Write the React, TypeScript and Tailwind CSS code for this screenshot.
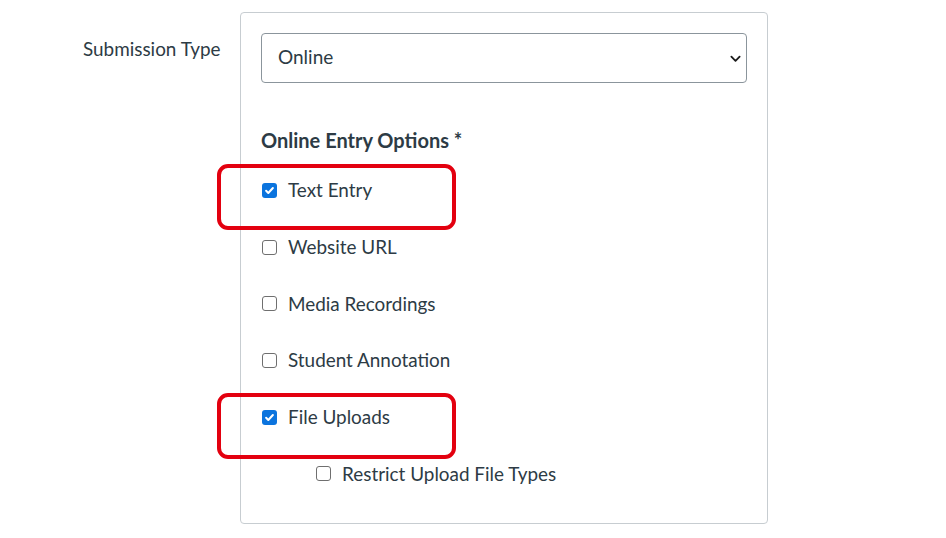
import React from "react";

const TEXT = "text-[#2d3b45]";

function Box({ checked }: { checked: boolean }) {
  if (checked) {
    return (
      <span className="w-[15px] h-[15px] rounded-[3px] bg-[#0b74de] flex items-center justify-center shrink-0">
        <svg viewBox="0 0 12 12" className="w-[11px] h-[11px]" fill="none" stroke="white" strokeWidth={2.2} strokeLinecap="round" strokeLinejoin="round">
          <path d="M2.3 6.3l2.4 2.4 5-5.4" />
        </svg>
      </span>
    );
  }
  return <span className="w-[15px] h-[15px] rounded-[3px] border border-[#6f6f6f] bg-white shrink-0" />;
}

function Option({ label, checked, indent }: { label: string; checked: boolean; indent?: boolean }) {
  return (
    <div className={`h-[56.7px] flex items-center gap-[11px] ${indent ? "pl-[55px]" : "pl-px"}`}>
      <Box checked={checked} />
      <span className={`text-[18.9px] ${TEXT}`}>{label}</span>
    </div>
  );
}

export default function App() {
  const options = [
    { label: "Text Entry", checked: true },
    { label: "Website URL", checked: false },
    { label: "Media Recordings", checked: false },
    { label: "Student Annotation", checked: false },
    { label: "File Uploads", checked: true },
  ];

  return (
    <div className="w-[946px] h-[538px] bg-white overflow-hidden font-['Lato','Liberation_Sans',sans-serif]">
      <div className="flex pl-[83px] pt-[12px]">
        <div className={`w-[157px] pt-[25px] text-[18.9px] leading-6 ${TEXT}`}>Submission Type</div>
        <div className="relative w-[528px] h-[512px] border border-[#c7cdd1] rounded-[4px] px-[20px] pt-[20px]">
          <div className="relative h-[50px] border border-[#8b959c] rounded-[4px] flex items-center pl-[16px] pb-px">
            <span className={`text-[19px] ${TEXT}`}>Online</span>
            <svg viewBox="0 0 12 8" className="absolute right-[5px] top-[21px] w-[11px] h-[8px]" fill="none" stroke="#1b1b1b" strokeWidth={2} strokeLinecap="round" strokeLinejoin="round">
              <path d="M1.5 1.5l4.5 4.5 4.5-4.5" />
            </svg>
          </div>
          <div className={`mt-[45px] text-[20px] leading-6 font-bold ${TEXT}`}>Online Entry Options *</div>
          <div className="mt-[10px]">
            {options.map((o) => (
              <Option key={o.label} label={o.label} checked={o.checked} />
            ))}
            <Option label="Restrict Upload File Types" checked={false} indent />
          </div>
          <div className="absolute left-[-24px] top-[151px] w-[239px] h-[66px] border-4 border-[#e3000f] rounded-[11px]" />
          <div className="absolute left-[-24px] top-[380px] w-[239px] h-[66px] border-4 border-[#e3000f] rounded-[11px]" />
        </div>
      </div>
    </div>
  );
}
